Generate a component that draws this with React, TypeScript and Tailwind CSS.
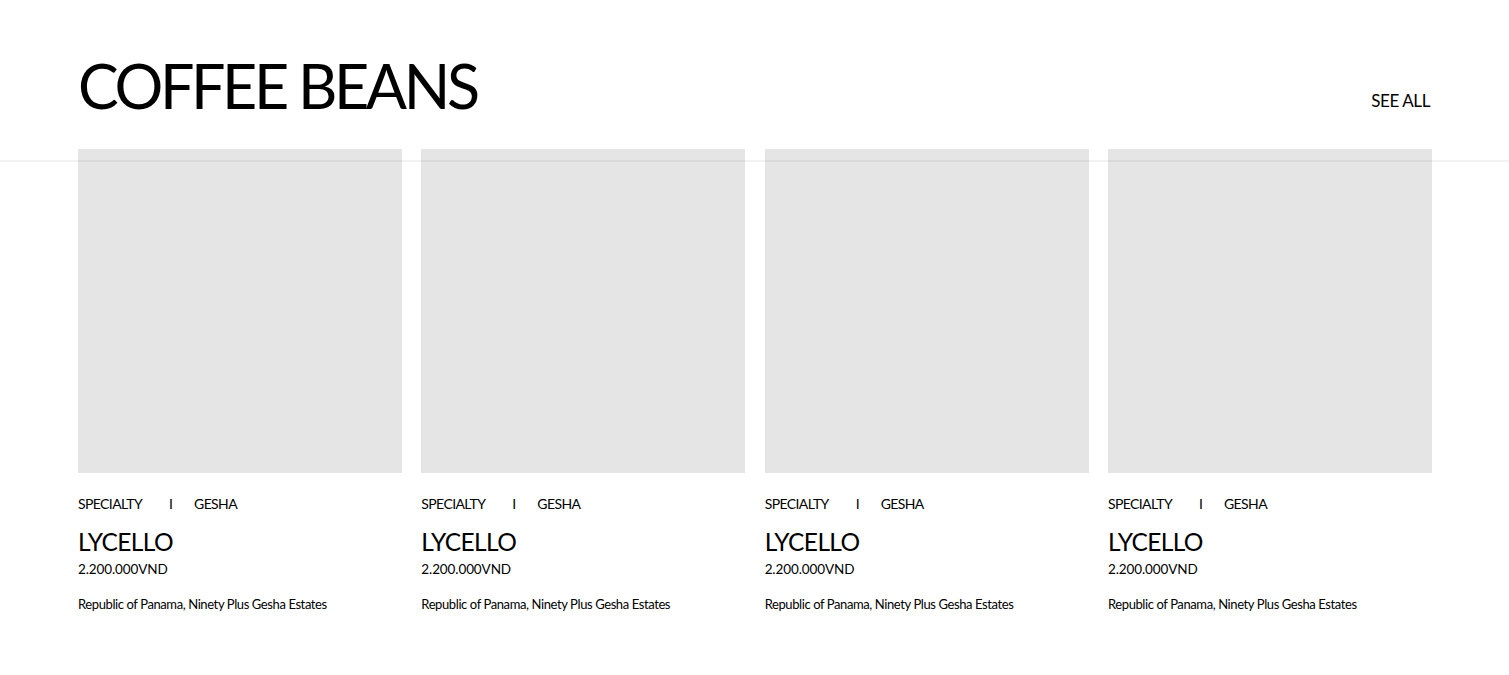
const products = Array.from({ length: 4 }, (_, i) => ({
  id: i,
  category: 'SPECIALTY',
  variety: 'GESHA',
  name: 'LYCELLO',
  price: '2.200.000VND',
  origin: 'Republic of Panama, Ninety Plus Gesha Estates',
}));

export default function App() {
  return (
    <div className="relative min-h-screen bg-white text-black font-['Lato',_'Liberation_Sans',_sans-serif]">
      <div className="pointer-events-none absolute left-0 right-0 top-[160px] z-10 h-[2px] bg-black/[0.05]" />

      <section className="pl-[78px] pr-[77px]">
        <div className="flex h-[149px] items-end justify-between">
          <h1 className="mb-[33px] text-[61px] font-normal leading-none tracking-[-3.4px]">COFFEE BEANS</h1>
          <a href="#" className="mb-[40px] mr-[2px] text-[17px] leading-none tracking-[-0.4px]">
            SEE ALL
          </a>
        </div>

        <div className="grid grid-cols-4 gap-[19.3px]">
          {products.map((p) => (
            <div key={p.id}>
              <div className="aspect-square w-full bg-[#e5e5e5]" />
              <div className="mt-[24px] flex text-[14px] leading-none tracking-[-0.6px]">
                <span className="w-[91px]">{p.category}</span>
                <span className="w-[25px]">I</span>
                <span>{p.variety}</span>
              </div>
              <h2 className="mt-[19px] text-[24.5px] leading-none tracking-[-0.6px]">{p.name}</h2>
              <p className="mt-[8px] text-[13.5px] leading-none tracking-[-0.1px]">{p.price}</p>
              <p className="mt-[22px] text-[13px] leading-none tracking-[-0.4px]">{p.origin}</p>
            </div>
          ))}
        </div>
      </section>
    </div>
  );
}
